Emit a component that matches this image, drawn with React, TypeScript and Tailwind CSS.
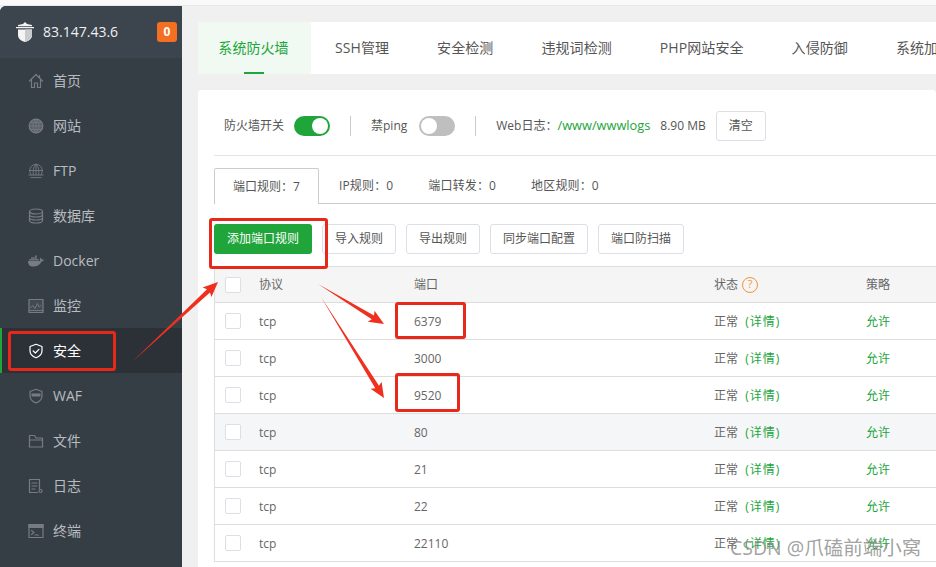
import type { ReactNode } from "react";
import { FaDocker } from "react-icons/fa";

const stroke = {
  fill: "none",
  stroke: "currentColor",
  strokeWidth: 1.2,
  strokeLinecap: "round" as const,
  strokeLinejoin: "round" as const,
};

function Icon({ children }: { children: ReactNode }) {
  return (
    <svg viewBox="0 0 16 16" className="h-4 w-4" {...stroke}>
      {children}
    </svg>
  );
}

const navItems: { label: string; icon: ReactNode; active?: boolean }[] = [
  {
    label: "首页",
    icon: (
      <Icon>
        <path d="M1.5 8 8 1.5 14.5 8M3.5 7v7.5h3V10h3v4.5h3V7M11.5 2.5v2" />
      </Icon>
    ),
  },
  {
    label: "网站",
    icon: (
      <Icon>
        <circle cx="8" cy="8" r="6.8" fill="currentColor" fillOpacity="0.55" />
        <path d="M1.2 8h13.6M2.2 4.6h11.6M2.2 11.4h11.6M8 1.2v13.6M8 1.2C3.8 5 3.8 11 8 14.8M8 1.2c4.2 3.8 4.2 9.800 0 13.600" strokeWidth="0.8" />
      </Icon>
    ),
  },
  {
    label: "FTP",
    icon: (
      <Icon>
        <path d="M3.200 12A6.400 6.400 0 1 1 12.800 12M1.600 7.500h12.800M8 1.200V12M8 1.200C4.800 4 4.800 9 5.500 12M8 1.200C11.200 4 11.200 9 10.500 12M.8 12h14.400M3 14.600h10" strokeWidth="0.9" />
      </Icon>
    ),
  },
  {
    label: "数据库",
    icon: (
      <Icon>
        <ellipse cx="8" cy="3.500" rx="6.500" ry="2.500" />
        <path d="M1.500 3.500v9c0 1.400 2.900 2.500 6.500 2.500s6.500-1.100 6.500-2.500v-9M1.500 6.500C1.500 7.900 4.400 9 8 9s6.500-1.100 6.500-2.500M1.500 9.500C1.500 10.900 4.400 12 8 12s6.500-1.100 6.500-2.500" />
      </Icon>
    ),
  },
  { label: "Docker", icon: <FaDocker className="h-4 w-4" /> },
  {
    label: "监控",
    icon: (
      <Icon>
        <rect x="1" y="1.500" width="14" height="13" fill="currentColor" fillOpacity="0.2" />
        <path d="M2.500 9.500 5 7.500l2 3 2.500-5 1.500 3.500 2-1.500M1 12.500h14" strokeWidth="0.9" />
      </Icon>
    ),
  },
  {
    label: "安全",
    active: true,
    icon: (
      <Icon>
        <path d="M8 1.300 14 3.500v4.300c0 3.300-2.600 5.800-6 7-3.400-1.200-6-3.700-6-7V3.500z" />
        <path d="M5.200 8 7.400 10l3.500-3.700" />
      </Icon>
    ),
  },
  {
    label: "WAF",
    icon: (
      <Icon>
        <path d="M8 1.300 14 3.500v4.500c0 3.200-2.600 5.700-6 6.900-3.400-1.200-6-3.700-6-6.900V3.500z" />
        <rect x="3.500" y="5.500" width="9" height="3" fill="currentColor" stroke="none" />
      </Icon>
    ),
  },
  {
    label: "文件",
    icon: (
      <Icon>
        <path d="M1.500 2.500h5l1.500 2.500h6.500v9h-13zM1.500 7h13" />
      </Icon>
    ),
  },
  {
    label: "日志",
    icon: (
      <Icon>
        <path d="M11.500 11V1.500h-10v13h8M4 5h5M4 8h5M4 11h3" />
        <circle cx="12.500" cy="13" r="1.500" />
      </Icon>
    ),
  },
  {
    label: "终端",
    icon: (
      <Icon>
        <rect x="1" y="1.500" width="14" height="13" />
        <rect x="1" y="1.500" width="14" height="3" fill="currentColor" />
        <path d="m3.500 7.500 2.500 2-2.500 2M7 12h3.500" />
      </Icon>
    ),
  },
];

const topTabs = ["SSH管理", "安全检测", "违规词检测", "PHP网站安全", "入侵防御", "系统加固"];
const actionButtons = ["导入规则", "导出规则", "同步端口配置", "端口防扫描"];
const subTabs = ["IP规则：0", "端口转发：0", "地区规则：0"];
const ports = ["6379", "3000", "9520", "80", "21", "22", "22110"];

const rowGrid = "grid grid-cols-[44px_155px_300px_152px_1fr] items-center";

function Sidebar() {
  return (
    <aside className="flex w-[182px] shrink-0 flex-col overflow-hidden rounded-tl-[6px] bg-[#363e45]">
      <div className="flex h-[52px] items-center bg-[#3c444d] pl-4 pr-[5px]">
        <svg viewBox="0 0 18 20" className="h-5 w-[18px]" fill="#f4f4f4">
          <path d="M9 0 11 2l5 1v1.200H2V3l5-1zM0 5h18v1.200H0zM2 7.500h14V13c0 3.500-3 6-7 7-4-1-7-3.500-7-7z" />
          <path d="M9 7.500h7V13c0 3.500-3 6-7 7z" fill="#c9cccf" />
        </svg>
        <span className="ml-[9px] text-sm text-[#eef0f1]">83.147.43.6</span>
        <span className="ml-auto flex h-5 w-5 items-center justify-center rounded-[3px] bg-[#f56f21] text-xs font-bold text-white">
          0
        </span>
      </div>
      {navItems.map((item) => (
        <div
          key={item.label}
          className={
            item.active
              ? "flex h-[45px] items-center gap-[10px] border-l-2 border-[#20a53a] bg-[#2c3138] pl-[26px] text-sm text-white"
              : "flex h-[45px] items-center gap-[10px] pl-7 text-sm text-[#b8bcc0]"
          }
        >
          <span className={item.active ? "text-white" : "text-[#767c82]"}>{item.icon}</span>
          <span className="ml-[-1px]">{item.label}</span>
        </div>
      ))}
    </aside>
  );
}

function Toggle({ on }: { on: boolean }) {
  return (
    <span
      className={
        on
          ? "flex h-5 w-9 items-center justify-end rounded-full bg-[#20a53a] px-[2px]"
          : "flex h-5 w-9 items-center rounded-full bg-[#bfbfbf] px-[2px]"
      }
    >
      <span className="h-4 w-4 rounded-full bg-white" />
    </span>
  );
}

function Checkbox() {
  return <span className="ml-[10px] block h-4 w-4 rounded-[2px] border border-[#dcdfe6] bg-white" />;
}

function FirewallCard() {
  return (
    <div className="mt-4 flex-1 rounded-t-[4px] bg-white pl-4">
      <div className="flex h-[66px] items-start border-b border-[#e4e4e4] pl-[10px] pt-[21px] text-xs text-[#555]">
        <div className="flex h-[30px] items-center">
          <span>防火墙开关</span>
          <span className="ml-[10px]"><Toggle on /></span>
          <span className="mx-5 h-5 w-px bg-[#ccc]" />
          <span>禁ping</span>
          <span className="ml-[12px]"><Toggle on={false} /></span>
          <span className="mx-5 h-5 w-px bg-[#ccc]" />
          <span>Web日志：</span>
          <span className="text-[12.8px] text-[#20a53a]">/www/wwwlogs</span>
          <span className="ml-[10px]">8.90 MB</span>
          <button className="ml-[10px] h-[30px] w-[50px] rounded-[3px] border border-[#dcdfe6] text-xs text-[#555]">
            清空
          </button>
        </div>
      </div>

      <div className="mt-3 flex h-9 items-stretch border-b border-[#ccc] text-xs text-[#555]">
        <div className="mb-[-1px] flex w-[105px] items-center justify-center rounded-t-[2px] border border-b-0 border-[#ccc] bg-white">
          端口规则：7
        </div>
        <div className="flex items-center gap-[35px] pl-5 tracking-[0.15px]">
          {subTabs.map((t) => (
            <span key={t}>{t}</span>
          ))}
        </div>
      </div>

      <div className="mt-5 flex gap-[10px] text-xs text-[#555]">
        <button className="h-[30px] w-[98px] rounded-[3px] bg-[#20a53a] text-white">添加端口规则</button>
        {actionButtons.map((b) => (
          <button key={b} className="h-[30px] rounded-[3px] border border-[#dcdfe6] px-3">
            {b}
          </button>
        ))}
      </div>

      <div className="mt-3 border-l border-[#ddd] text-xs text-[#666]">
        <div className={`${rowGrid} h-[37px] border-y border-[#ddd] bg-[#f5f5f5]`}>
          <Checkbox />
          <span>协议</span>
          <span>端口</span>
          <span className="flex items-center gap-1">
            状态
            <span className="flex h-4 w-4 items-center justify-center rounded-full border border-[#f0953a] text-[11px] text-[#f0953a]">
              ?
            </span>
          </span>
          <span>策略</span>
        </div>
        {ports.map((port) => (
          <div
            key={port}
            className={
              port === "80"
                ? `${rowGrid} h-[37px] border-b border-[#ddd] bg-[#f5f6f8]`
                : `${rowGrid} h-[37px] border-b border-[#ddd]`
            }
          >
            <Checkbox />
            <span className="pt-px">tcp</span>
            <span className="pt-px">{port}</span>
            <span className="pt-px">
              正常 <span className="ml-1 tracking-[1px] text-[#20a53a]">(详情)</span>
            </span>
            <span className="pt-px text-[#20a53a]">允许</span>
          </div>
        ))}
      </div>
    </div>
  );
}

function arrowPoints(x1: number, y1: number, x2: number, y2: number) {
  const len = Math.hypot(x2 - x1, y2 - y1);
  const ux = (x2 - x1) / len;
  const uy = (y2 - y1) / len;
  const at = (along: number, side: number) =>
    `${x2 - ux * along - uy * side},${y2 - uy * along + ux * side}`;
  return [
    `${x1},${y1}`,
    at(13, 2.2),
    at(15, 6.5),
    `${x2},${y2}`,
    at(15, -6.5),
    at(13, -2.2),
  ].join(" ");
}

const redBox = "absolute rounded-[3px] border-[3px] border-[#e8281a]";

export default function App() {
  return (
    <div
      className="relative flex h-[567px] w-[936px] flex-col overflow-hidden bg-[#f0f0f0]"
      style={{ fontFamily: '"Open Sans", "Noto Sans CJK SC", sans-serif' }}
    >
      <div className="h-[6px] shrink-0 border-b border-[#e8e8e8] bg-[#f9f9f9]" />
      <div className="flex min-h-0 flex-1">
        <Sidebar />
        <main className="flex min-w-0 flex-1 flex-col pl-4 pt-4">
          <div className="flex h-[52px] shrink-0 overflow-hidden rounded-l-[4px] bg-white text-sm tracking-[0.08px] text-[#555]">
            <div className="relative flex w-[113px] shrink-0 items-center justify-center bg-[#f0f9f2] pr-[2px] text-[#20a53a]">
              系统防火墙
              <span className="absolute bottom-0 left-[46px] h-[2px] w-5 bg-[#20a53a]" />
            </div>
            {topTabs.map((t) => (
              <div key={t} className="flex shrink-0 items-center px-6">
                {t}
              </div>
            ))}
          </div>
          <FirewallCard />
        </main>
      </div>

      {/* annotations drawn over the screenshot */}
      <div className={`${redBox} left-[8px] top-[331px] h-[40px] w-[108px]`} />
      <div className={`${redBox} left-[209px] top-[218px] h-[51px] w-[119px]`} />
      <div className={`${redBox} left-[395px] top-[302px] h-[37px] w-[71px]`} />
      <div className={`${redBox} left-[395px] top-[373px] h-[39px] w-[65px]`} />
      <svg viewBox="0 0 936 567" className="absolute inset-0 h-[567px] w-[936px]" fill="#f0301e">
        <polygon points={arrowPoints(132, 362, 218, 282)} />
        <polygon points={arrowPoints(318, 284, 384, 324)} />
        <polygon points={arrowPoints(321, 297, 384, 398)} />
      </svg>
      <div className="absolute left-[730px] top-[536px] text-[19.5px] leading-6 text-[#8a8a8a]/80">
        CSDN @爪磕前端小窝
      </div>
    </div>
  );
}
